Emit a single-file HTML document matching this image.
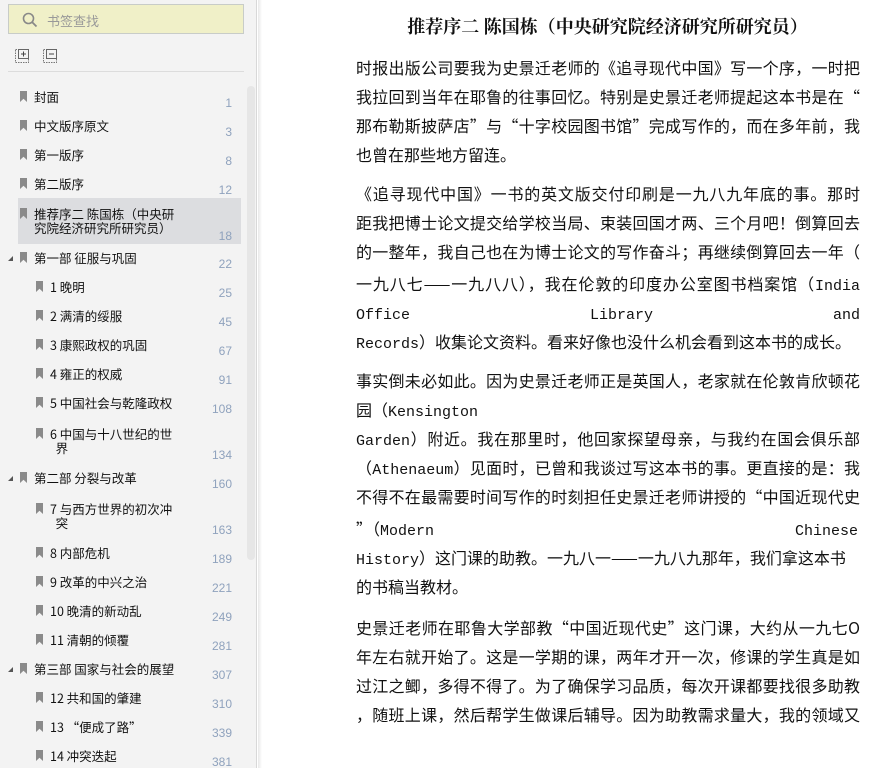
<!DOCTYPE html>
<html><head><meta charset="utf-8"><style>
*{margin:0;padding:0;box-sizing:border-box}
body{width:893px;height:768px;overflow:hidden;background:#fff;position:relative;font-family:"Liberation Sans","Noto Sans CJK SC",sans-serif;}
#side{position:absolute;left:0;top:0;width:257px;height:768px;background:#f3f3f3;border-right:1px solid #d8d8d8}
#shadow{position:absolute;left:258px;top:0;width:4px;height:768px;background:linear-gradient(to right,#e8e8e8,#fff)}
.search{position:absolute;left:8px;top:4px;width:236px;height:30px;background:#f0f0c8;border:1px solid #c8ccc8}
.search span{position:absolute;left:38px;top:6px;font-size:13px;color:#999}
.hr{position:absolute;left:8px;top:71px;width:236px;height:1px;background:#dcdcdc}
.scroll{position:absolute;left:247px;top:86px;width:8px;height:474px;background:#e6e6e6;border-radius:4px}
.sel{position:absolute;left:18px;top:198px;width:223px;height:46px;background:#dcdde0}
.it{position:absolute;font-size:12.5px;color:#111;line-height:14px;white-space:nowrap;font-family:"Noto Sans CJK SC",sans-serif}
.bm{position:absolute;width:7px;height:11px;background:#8a8a8a;clip-path:polygon(0 0,100% 0,100% 100%,50% 70%,0 100%)}
.n{position:absolute;right:24px;font-size:12px;color:#8fa2bd;width:40px;text-align:right}
.tri{position:absolute;left:8px;width:0;height:0;border-left:5px solid transparent;border-bottom:5px solid #555}
.t{position:absolute;left:356px;width:502px;font-size:16px;line-height:29px;color:#111;white-space:nowrap;font-family:"Noto Sans CJK SC",sans-serif;margin-top:-3px}
.t b{font-weight:normal;font-family:"Liberation Mono",monospace;font-size:15px}
.j{text-align:justify;text-align-last:justify;white-space:normal;width:504px}
h1{position:absolute;left:330px;width:555px;top:13px;text-align:center;font-size:18px;font-weight:bold;color:#111;font-family:"Noto Serif CJK SC",serif}
</style></head><body>
<div id="side">
<div class="search"><svg style="position:absolute;left:13px;top:7px" width="16" height="16"><circle cx="6.5" cy="6.5" r="5" fill="none" stroke="#888" stroke-width="1.6"/><line x1="10" y1="10" x2="14.5" y2="14.5" stroke="#888" stroke-width="1.8"/></svg><span>书签查找</span></div>
<svg style="position:absolute;left:14px;top:48px" width="50" height="16"><rect x="1.5" y="1.5" width="13" height="13" fill="none" stroke="#777" stroke-dasharray="1.5 1"/><rect x="4.5" y="1.5" width="10" height="9" fill="#f3f3f3" stroke="#666"/><line x1="7" y1="6" x2="12" y2="6" stroke="#444"/><line x1="9.5" y1="3.5" x2="9.5" y2="8.5" stroke="#444"/><rect x="29.5" y="1.5" width="13" height="13" fill="none" stroke="#777" stroke-dasharray="1.5 1"/><rect x="32.5" y="1.5" width="10" height="9" fill="#f3f3f3" stroke="#666"/><line x1="35" y1="6" x2="40" y2="6" stroke="#444"/></svg>
<div class="hr"></div>
<div class="scroll"></div>
<div class="sel"></div>

<div class="bm" style="left:20px;top:91px"></div><div class="it" style="left:34px;top:90px">封面</div><div class="n" style="top:96px">1</div>
<div class="bm" style="left:20px;top:120px"></div><div class="it" style="left:34px;top:119px">中文版序原文</div><div class="n" style="top:125px">3</div>
<div class="bm" style="left:20px;top:149px"></div><div class="it" style="left:34px;top:148px">第一版序</div><div class="n" style="top:154px">8</div>
<div class="bm" style="left:20px;top:178px"></div><div class="it" style="left:34px;top:177px">第二版序</div><div class="n" style="top:183px">12</div>
<div class="bm" style="left:20px;top:208px"></div><div class="it" style="left:34px;top:207px">推荐序二 陈国栋（中央研<br>究院经济研究所研究员）</div><div class="n" style="top:229px">18</div>
<div class="tri" style="top:256px"></div><div class="bm" style="left:20px;top:252px"></div><div class="it" style="left:34px;top:251px">第一部 征服与巩固</div><div class="n" style="top:257px">22</div>
<div class="bm" style="left:36px;top:281px"></div><div class="it" style="left:50px;top:280px">1 晚明</div><div class="n" style="top:286px">25</div>
<div class="bm" style="left:36px;top:310px"></div><div class="it" style="left:50px;top:309px">2 满清的绥服</div><div class="n" style="top:315px">45</div>
<div class="bm" style="left:36px;top:339px"></div><div class="it" style="left:50px;top:338px">3 康熙政权的巩固</div><div class="n" style="top:344px">67</div>
<div class="bm" style="left:36px;top:368px"></div><div class="it" style="left:50px;top:367px">4 雍正的权威</div><div class="n" style="top:373px">91</div>
<div class="bm" style="left:36px;top:397px"></div><div class="it" style="left:50px;top:396px">5 中国社会与乾隆政权</div><div class="n" style="top:402px">108</div>
<div class="bm" style="left:36px;top:428px"></div><div class="it" style="left:50px;top:427px">6 中国与十八世纪的世<br>&nbsp;&nbsp;界</div><div class="n" style="top:448px">134</div>
<div class="tri" style="top:476px"></div><div class="bm" style="left:20px;top:472px"></div><div class="it" style="left:34px;top:471px">第二部 分裂与改革</div><div class="n" style="top:477px">160</div>
<div class="bm" style="left:36px;top:503px"></div><div class="it" style="left:50px;top:502px">7 与西方世界的初次冲<br>&nbsp;&nbsp;突</div><div class="n" style="top:523px">163</div>
<div class="bm" style="left:36px;top:547px"></div><div class="it" style="left:50px;top:546px">8 内部危机</div><div class="n" style="top:552px">189</div>
<div class="bm" style="left:36px;top:576px"></div><div class="it" style="left:50px;top:575px">9 改革的中兴之治</div><div class="n" style="top:581px">221</div>
<div class="bm" style="left:36px;top:605px"></div><div class="it" style="left:50px;top:604px">10 晚清的新动乱</div><div class="n" style="top:610px">249</div>
<div class="bm" style="left:36px;top:634px"></div><div class="it" style="left:50px;top:633px">11 清朝的倾覆</div><div class="n" style="top:639px">281</div>
<div class="tri" style="top:667px"></div><div class="bm" style="left:20px;top:663px"></div><div class="it" style="left:34px;top:662px">第三部 国家与社会的展望</div><div class="n" style="top:668px">307</div>
<div class="bm" style="left:36px;top:692px"></div><div class="it" style="left:50px;top:691px">12 共和国的肇建</div><div class="n" style="top:697px">310</div>
<div class="bm" style="left:36px;top:721px"></div><div class="it" style="left:50px;top:720px">13 “便成了路”</div><div class="n" style="top:726px">339</div>
<div class="bm" style="left:36px;top:750px"></div><div class="it" style="left:50px;top:749px">14 冲突迭起</div><div class="n" style="top:755px">381</div>
</div>
<div id="shadow"></div>

<h1>推荐序二 陈国栋（中央研究院经济研究所研究员）</h1>
<div class="t j" style="top:56px">时报出版公司要我为史景迁老师的《追寻现代中国》写一个序，一时把</div>
<div class="t j" style="top:85px">我拉回到当年在耶鲁的往事回忆。特别是史景迁老师提起这本书是在“</div>
<div class="t j" style="top:114px">那布勒斯披萨店”与“十字校园图书馆”完成写作的，而在多年前，我</div>
<div class="t" style="top:143px">也曾在那些地方留连。</div>
<div class="t j" style="top:182px">《追寻现代中国》一书的英文版交付印刷是一九八九年底的事。那时</div>
<div class="t j" style="top:211px">距我把博士论文提交给学校当局、束装回国才两、三个月吧！倒算回去</div>
<div class="t j" style="top:240px">的一整年，我自己也在为博士论文的写作奋斗；再继续倒算回去一年（</div>
<div class="t j" style="top:272px">一九八七——一九八八），我在伦敦的印度办公室图书档案馆（<b>India</b></div>
<div class="t j" style="top:301px"><b>Office Library and</b></div>
<div class="t" style="top:330px"><b>Records</b>）收集论文资料。看来好像也没什么机会看到这本书的成长。</div>
<div class="t j" style="top:369px">事实倒未必如此。因为史景迁老师正是英国人，老家就在伦敦肯欣顿花</div>
<div class="t" style="top:398px">园（<b>Kensington</b></div>
<div class="t j" style="top:427px"><b>Garden</b>）附近。我在那里时，他回家探望母亲，与我约在国会俱乐部</div>
<div class="t j" style="top:456px">（<b>Athenaeum</b>）见面时，已曾和我谈过写这本书的事。更直接的是：我</div>
<div class="t j" style="top:485px">不得不在最需要时间写作的时刻担任史景迁老师讲授的“中国近现代史</div>
<div class="t" style="top:517px">”（<b>Modern</b><span style="position:absolute;right:0"><b>Chinese</b></span></div>
<div class="t" style="top:546px"><b>History</b>）这门课的助教。一九八一——一九八九那年，我们拿这本书</div>
<div class="t" style="top:575px">的书稿当教材。</div>
<div class="t j" style="top:616px">史景迁老师在耶鲁大学部教“中国近现代史”这门课，大约从一九七O</div>
<div class="t j" style="top:645px">年左右就开始了。这是一学期的课，两年才开一次，修课的学生真是如</div>
<div class="t j" style="top:674px">过江之鲫，多得不得了。为了确保学习品质，每次开课都要找很多助教</div>
<div class="t j" style="top:703px">，随班上课，然后帮学生做课后辅导。因为助教需求量大，我的领域又</div>
</body></html>
